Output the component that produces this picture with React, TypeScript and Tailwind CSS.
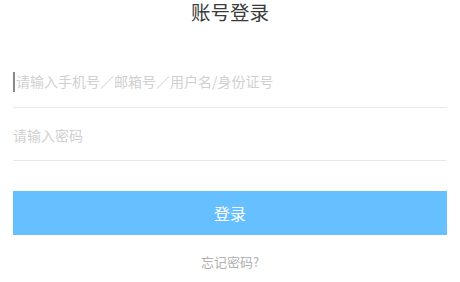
import React from "react";

export default function App() {
  const font = { fontFamily: '"Noto Sans CJK SC", "Noto Sans", sans-serif' };
  return (
    <div className="w-[460px] h-[282px] bg-white overflow-hidden" style={font}>
      <div className="h-[24px] leading-[24px] text-center text-[19.5px] text-[#3a3a3a]">账号登录</div>
      <div className="px-[13px] mt-[32px]">
        <div className="h-[52px] flex items-center border-b border-[#e8e8e8]">
          <span className="w-[2px] h-[20px] bg-[#888] mr-[1px]" />
          <span className="text-[14px] text-[#d0d0d0]">请输入手机号／邮箱号／用户名/身份证号</span>
        </div>
        <div className="h-[53px] flex items-center border-b border-[#e8e8e8]">
          <span className="text-[14px] text-[#d0d0d0] pt-[2px]">请输入密码</span>
        </div>
        <button className="mt-[30px] w-full h-[44px] bg-[#66bfff] text-white text-[16px] flex items-center justify-center">
          登录
        </button>
        <div className="mt-[17px] h-[20px] leading-[20px] text-center text-[13px] text-[#b0b0b0]">忘记密码?</div>
      </div>
    </div>
  );
}
